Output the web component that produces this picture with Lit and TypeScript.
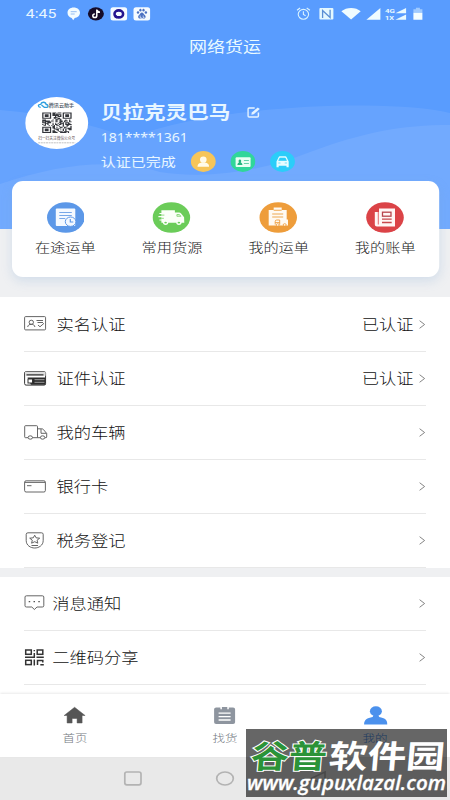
import { LitElement, html, svg, css, TemplateResult, SVGTemplateResult } from "lit";
import { customElement } from "lit/decorators.js";

// The stage is 375 units wide and stretched to 450; icon art is drawn in stretched pixels.
const STRETCH = 1.2;
const icon = (w: number, h: number, body: SVGTemplateResult): TemplateResult => html`
  <svg width=${w / STRETCH} height=${h} viewBox="0 0 ${w} ${h}" preserveAspectRatio="none">${body}</svg>`;

const SIZE = 23;
const qrPath = (): string => {
  let d = "";
  let seed = 77;
  const finder = (x: number, y: number) => {
    const r = Math.max(Math.abs(x - 3), Math.abs(y - 3));
    return r === 3 || r <= 1;
  };
  for (let y = 0; y < SIZE; y++) {
    for (let x = 0; x < SIZE; x++) {
      seed = (seed * 1103515245 + 12345) % 2147483648;
      let on = seed / 2147483648 > 0.48;
      const far = SIZE - 7;
      if (x < 8 && y < 8) on = x < 7 && y < 7 && finder(x, y);
      else if (x >= far - 1 && y < 8) on = x >= far && y < 7 && finder(x - far, y);
      else if (x < 8 && y >= far - 1) on = x < 7 && y >= far && finder(x, y - far);
      if (on) d += `M${x} ${y}h1v1h-1z`;
    }
  }
  return d;
};

const statusLeft = icon(84, 14, svg`
  <path d="M6.500 .5C10 .5 12.800 2.700 12.800 5.800S10 11 7.500 11L6 13.300 4.500 10.900C2 10.300 .2 8.500 .2 5.800.2 2.700 3 .5 6.500 .5z" fill="#f3fcff"/>
  <path d="M3.500 4.700h6M3.500 7h4" stroke="#8ab7ef" stroke-width=".9"/>
  <ellipse cx="28.700" cy="6.800" rx="8" ry="6.600" fill="#160c29"/>
  <path d="M29.600 2.500v6.200a2 1.800 0 1 1-2-1.800M29.600 2.800c.5 1.700 1.600 2.300 3.200 2.500" fill="none" stroke="#fff" stroke-width="1.500"/>
  <rect x="43.300" y=".2" width="16.600" height="13.400" rx="2.500" fill="#f5fbff"/>
  <ellipse cx="51.600" cy="6.900" rx="4.300" ry="3.500" fill="#f5fbff" stroke="#24148f" stroke-width="2.600"/>
  <path d="M47 10l2-2 2 2-2 1.500z" fill="#24148f"/>
  <rect x="66.300" y=".2" width="16.600" height="13.400" rx="2.500" fill="#f5fbff"/>
  <g fill="#4a71c2"><ellipse cx="70.800" cy="5.500" rx="1.200" ry="1.300"/><ellipse cx="73.200" cy="3.200" rx="1.100" ry="1.400"/><ellipse cx="76.300" cy="3.200" rx="1.100" ry="1.400"/><ellipse cx="78.700" cy="5.500" rx="1.200" ry="1.300"/>
  <path d="M74.700 5.500c1.200 0 1.700 1.500 2.800 2.400 1.800 1.500.8 3.900-1.200 3.600-1-.2-2.200-.2-3.200 0-2 .3-3-2.100-1.200-3.600 1.100-.9 1.600-2.400 2.800-2.400z"/></g>
  <path d="M73 8.500v2h1.300M76 8.500v2h1.300" stroke="#f5fbff" stroke-width=".7" fill="none"/>`);

const statusRight = icon(127, 14, svg`
  <g fill="none" stroke="#d9f3ff" stroke-width="1.100"><ellipse cx="7" cy="7.300" rx="5.200" ry="4.900"/><path d="M7 4.300v3.200l2.200 1.200M.5 3.300L3.700 1M10.300 1l3.200 2.300M1.500 2.500h1M12 2.500h1"/></g>
  <rect x="23" y="1" width="14" height="11.500" rx="1" fill="#e4f8ff"/>
  <path d="M26.200 11V3.500l7.500 7V2.800" fill="none" stroke="#5a8fd4" stroke-width="1.300"/>
  <path d="M45 4.300C50 -.2 59.500 -.2 64.300 4.300L54.700 12.500z" fill="#f0fcff"/>
  <path d="M70 12.700L84 1v11.700z" fill="#f0fcff"/>
  <text x="88.500" y="5.900" font-size="5.800" font-weight="700" font-family="Roboto" fill="#e9faff" textLength="10" lengthAdjust="spacingAndGlyphs">4G</text>
  <text x="88.500" y="12.700" font-size="5.800" font-weight="700" font-family="Roboto" fill="#e9faff" textLength="9" lengthAdjust="spacingAndGlyphs">1X</text>
  <path d="M99 6.200L109.700 1v5.200zM99 12.700L109.700 7.500v5.200z" fill="#e9faff"/>
  <path d="M117 2.200h2.500V.8h4v1.400h2.500v3.600h-9z" fill="#9fcaff"/><path d="M117 5.800h9v7h-9z" fill="#f3fdff"/>`);

const waves = svg`
  <path d="M0 110C50 114 90 124 130 138C190 114 290 105 365 105.500C400 106 430 108 450 113V229H0z" fill="#fff" fill-opacity=".08"/>
  <path d="M0 184C60 164 110 158 160 172C210 180 265 170 310 152C365 132 400 125 450 125V229H0z" fill="#fff" fill-opacity=".08"/>`;

const avatar = icon(63, 52, svg`
  <ellipse cx="31.500" cy="26" rx="31.500" ry="26" fill="#fff"/>
  <path d="M15.500 10.300c-3-.2-3.200-3 0-3 .6-2.800 5-2.700 5.400.2 2.500.2 2.500 2.800.2 2.800h-2l-2.800-2.200" fill="none" stroke="#2f9fdf" stroke-width="1.300"/>
  <text x="23.500" y="10.300" font-size="5" font-weight="500" font-family="Noto Sans CJK SC" fill="#49545f" textLength="25.500" lengthAdjust="spacingAndGlyphs">腾讯云助手</text>
  <path d=${qrPath()} transform="translate(17 15.500) scale(1.280 .89)" fill="#33353a"/>
  <text x="13" y="43" font-size="4" font-family="Noto Sans CJK SC" fill="#5a4a4a" textLength="37" lengthAdjust="spacingAndGlyphs">扫一扫关注微信公众号</text>
  <path d="M13 45.800h37" stroke="#b3b3b3" stroke-width=".8" stroke-dasharray="2 .6"/>`);

const edit = icon(13, 11, svg`<path d="M7.500 1H2Q.8 1 .8 2v7q0 1 1.200 1h8q1.200 0 1.200-1V5.500" fill="none" stroke="#e6f4ff" stroke-width="1.500"/><path d="M4.200 7.800l.3-2.300L10.600.4l2 1.700L6.500 7.300z" fill="#e6f4ff"/>`);

const badges = [
  icon(25, 21, svg`<ellipse cx="12.500" cy="10.500" rx="12.400" ry="10.400" fill="#f6c559"/><ellipse cx="12.500" cy="8.700" rx="3.300" ry="3.100" fill="#fffbea"/><path d="M6.700 15.800c0-3 2.300-4.300 5.800-4.300s5.800 1.300 5.800 4.300z" fill="#fffbea"/>`),
  icon(25, 21, svg`<ellipse cx="12.500" cy="10.500" rx="12.400" ry="10.400" fill="#30d69a"/><rect x="5.200" y="6.300" width="15" height="9.800" rx="1" fill="#e8fff4"/><path d="M7 14c0-2 1-2.300 1.600-2.600-.9-1.200-.3-2.800.9-2.800s1.800 1.600.9 2.800c.7.300 1.600.6 1.600 2.600z" fill="#24b57e"/><path d="M13.500 9.500h5M13.500 12.500h5" stroke="#63d2a9" stroke-width="1.200"/>`),
  icon(25, 21, svg`<ellipse cx="12.500" cy="10.500" rx="12.400" ry="10.400" fill="#2bcdf9"/><path d="M6.500 10.500L8.700 6q.3-.7 1-.7h5.800q.7 0 1 .7l2.200 4.500v5.800h-2.200v-1.500H8.700v1.500H6.500z" fill="#e6fcff"/><path d="M8.700 9.500l1.200-2.500h5.400l1.200 2.500zM8.300 12h2.200M14.700 12H17" fill="#2bcdf9" stroke="#2bcdf9" stroke-width=".6"/>`),
];

const disc = (color: string, body: SVGTemplateResult) => icon(38, 31, svg`<ellipse cx="19" cy="15.500" rx="18.800" ry="15.300" fill=${color}/>${body}`);
const actions = [
  { label: "在途运单", art: disc("#5c98e8", svg`<rect x="9" y="6.500" width="19.500" height="17.500" rx="1" fill="#f4f9ff"/><path d="M12.500 10.500H25M12.500 13.500H25M12.500 16.500h6" stroke="#78a8e8" stroke-width="1.100"/><ellipse cx="23.800" cy="19.700" rx="5.300" ry="4.700" fill="#f4f9ff" stroke="#5c98e8" stroke-width="1"/><path d="M23.500 17v3h3" fill="none" stroke="#5c98e8" stroke-width="1.200"/>`) },
  { label: "常用货源", art: disc("#6bcc59", svg`<path d="M9 8.200h13.500v2.300h4.200q1.200 0 2 1l3 3.700.2 5.500H9z" fill="#fbfff8"/><path d="M7 11.500h5.500M6 14.700h5.500M7 18h4" stroke="#fbfff8" stroke-width="1.200"/><path d="M9 13.100h3M9 16.300h2.500M24.500 12.500h2.500l1.500 1.800h-4z" stroke="#6bcc59" stroke-width=".7" fill="#e3f6df"/><g fill="#6bcc59" stroke="#fbfff8" stroke-width="1.400"><ellipse cx="13.200" cy="20.600" rx="2" ry="1.600"/><ellipse cx="26.500" cy="20.600" rx="2" ry="1.600"/></g>`) },
  { label: "我的运单", art: disc("#ee9d3b", svg`<path d="M9.500 8h5V5.500h8V8h5v9.500h1.300v6H9.500z" fill="#fffaf2"/><path d="M14.500 8.200h8M13 12h11M13 15h11" stroke="#eea850" stroke-width="1.100"/><path d="M16 22.500v-3q0-1.500 1.500-1.500h3v4.500" stroke="#ee9d3b" fill="none" stroke-width=".9"/><path d="M16 20.500h4.500" stroke="#ee9d3b" stroke-width=".8"/><ellipse cx="18.500" cy="22.900" rx="1.500" ry="1.200" fill="#fff" stroke="#ee9d3b" stroke-width=".9"/><ellipse cx="25.500" cy="22.900" rx="1.500" ry="1.200" fill="#fff" stroke="#ee9d3b" stroke-width=".9"/>`) },
  { label: "我的账单", art: disc("#db4347", svg`<path d="M13 6.500h16v18H11q-2.200 0-2.200-2V10H13z" fill="#fff6f5"/><path d="M12.300 10v12.500" stroke="#db4347" stroke-width=".8"/><rect x="16.500" y="10.200" width="8.500" height="4" fill="#fff6f5" stroke="#b8454c" stroke-width="1.300"/><path d="M16 17.200h9.700M16 20.500h9.700" stroke="#c8484c" stroke-width="1.300"/>`) },
];

const line = (w: number, h: number, body: SVGTemplateResult) => icon(w, h, svg`<g fill="none" stroke="#555" stroke-width=".9">${body}</g>`);
const listA = [
  { label: "实名认证", value: "已认证", art: line(23, 15, svg`<rect x=".6" y=".6" width="21" height="13.300" rx="1"/><ellipse cx="7.300" cy="6.300" rx="2.200" ry="2.100"/><path d="M3.700 11c.3-2 1.700-2.700 3.600-2.700s3.300.7 3.600 2.700M12.500 4.500H19M13.500 6.500H19M14 9l2 1.800 4-3.500"/>`) },
  { label: "证件认证", value: "已认证", art: icon(23, 15, svg`<rect x=".6" y=".6" width="21" height="13.500" rx="1.500" fill="#fff" stroke="#333"/><path d="M1 .8h20.600v4H1z" fill="#ddd"/><path d="M2.500 3.900h17" stroke="#333" stroke-width="1.300"/><path d="M3.500 6.500h18v7.300H7z" fill="#2c2c2c"/><rect x="4" y="8" width="4.500" height="4" fill="#fff" stroke="#333"/><path d="M10.500 8.700h10M10.500 11.300h10" stroke="#aaa" stroke-width=".9"/>`) },
  { label: "我的车辆", value: "", art: line(24, 15, svg`<path d="M4 12.700H1.500q-.8 0-.8-.8V1.500q0-.8.800-.8H12.500q1 0 1 .8v11.200H8.500M13.500 3.800h4.300q1 0 1.700.8l3.200 3.900v3.500q0 .7-.8.700h-1M16.500 12.700h-3M17 4v4.300h5.500"/><ellipse cx="6.300" cy="12.500" rx="2.200" ry="1.700"/><ellipse cx="18.600" cy="12.500" rx="2.200" ry="1.700"/>`) },
  { label: "银行卡", value: "", art: line(23, 13, svg`<rect x=".6" y=".8" width="20.800" height="11.200" rx="1.500"/><path d="M.6 2.400h20.800M3 5.700h4.500"/>`) },
  { label: "税务登记", value: "", art: line(23, 17, svg`<path d="M4 .8h13.500q1.700 0 1.700 1.500v6.200c0 5-4.500 7.500-8.500 7.500s-8.500-2.500-8.500-7.500V2.300Q2.200.8 4 .8zM7.500 13.500H14"/><path d="M10.700 3.200l1.400 2.600 3.600.4-2.600 2 .7 3-3.100-1.500L7.600 11.200l.7-3-2.600-2 3.600-.4z"/>`) },
];
const listB = [
  { label: "消息通知", art: line(21, 16, svg`<path d="M2.500.8h15.800q1.500 0 1.500 1.200v8.800q0 1.200-1.500 1.200H13l-2.600 2.500L7.800 12H2.500Q1 12 1 10.800V2Q1 .8 2.500.8z"/><path d="M4.700 6.600h1.500M9.500 6.600H11M14.300 6.600h1.500" stroke-width="1.300"/>`) },
  { label: "二维码分享", art: icon(21, 17, svg`<g fill="none" stroke="#333" stroke-width="1.500"><rect x="1.700" y="1" width="5.600" height="4.300"/><rect x="13.200" y="1" width="5.600" height="4.300"/><rect x="1.700" y="11.300" width="5.600" height="4.300"/><path d="M1 8.300h9.300V4M10.300 1v1.300M12.500 8.300h7.300M10.300 10.500v6M13.500 16v-4.500h5.300v2M16.300 15.800h3.500"/></g>`) },
];
const arrow = icon(7, 9, svg`<path d="M.8.7l5 3.800-5 3.800" fill="none" stroke="#777" stroke-width=".9"/>`);

const tabs = [
  { cls: "", label: "首页", art: icon(22, 19, svg`<path d="M11 1.300L21.500 9.500h-3V17h-5v-4.500h-5V17h-5V9.500h-3z" fill="#555" stroke="#555" stroke-width=".5" stroke-linejoin="round"/>`) },
  { cls: "", label: "找货", art: icon(22, 19, svg`<path d="M2.500 1.500h4.300v1.800h1.500V1h5.400v2.300h1.500V1.500h4.300q2 0 2 1.800v13q0 1.800-2 1.800h-17q-2 0-2-1.800v-13q0-1.800 2-1.800z" fill="#8e959f"/><path d="M5 7.200h12M5 10.600h12M5 14h12" stroke="#fff" stroke-width="1.300"/>`) },
  { cls: "on", label: "我的", art: icon(24, 19, svg`<ellipse cx="12.300" cy="5.200" rx="6" ry="4.900" fill="#4b91ed"/><path d="M.5 18.500c0-5 3-6.300 8.500-7.500l1-2h4.600l1 2c5.500 1.200 8.200 2.500 8.200 7.500z" fill="#4b91ed"/>`) },
];

@customElement("app-root")
export class AppRoot extends LitElement {
  static styles = css`
    :host { display: block; position: relative; width: 450px; height: 800px; overflow: hidden; font-family: "Noto Sans CJK SC", sans-serif; }
    * { box-sizing: border-box; }
    svg { display: block; flex: none; }
    .stage { width: 375px; height: 800px; transform: scaleX(1.2); transform-origin: 0 0; background: #eff0f2; display: flex; flex-direction: column; white-space: nowrap; }
    .hero { position: relative; height: 229px; flex: none; background: #599cfe; color: #e8f6ff; }
    .waves { position: absolute; inset: 0; width: 375px; height: 229px; }
    .inner { position: relative; }
    .status { display: flex; height: 28px; align-items: center; padding: 0 22px 0 21.500px; }
    .clock { font: 400 13.200px/28px Roboto, sans-serif; width: 34px; }
    .spacer { flex: 1; }
    .title { height: 36px; line-height: 36px; text-align: center; font-size: 15px; color: #eafaff; }
    .profile { display: flex; padding: 33px 0 0 21px; }
    .who { padding-left: 10.500px; margin-top: -1px; }
    .name { display: flex; align-items: center; gap: 14px; height: 30px; font-size: 18px; font-weight: 700; }
    .name svg { margin-top: 3px; }
    .phone { height: 23px; line-height: 23px; font: 400 11.700px/23px "Noto Sans", sans-serif; }
    .cert { display: flex; align-items: center; height: 24px; font-size: 12.500px; }
    .badges { display: flex; gap: 8px; padding-left: 12.500px; }
    .badges svg + svg { margin-left: 4px; }
    .card { position: relative; flex: none; display: flex; height: 96px; margin: -48px 9.500px 0 10px; padding-top: 21px; background: #fff; border-radius: 9px / 11px; box-shadow: 0 4px 10px rgba(120, 165, 210, .24); }
    .action { flex: 1; display: flex; flex-direction: column; align-items: center; font-size: 12.700px; font-weight: 300; line-height: 20px; gap: 4px; color: #222; }
    .list { flex: none; background: #fff; padding: 0 20px; }
    .a { margin-top: 20px; height: 271px; }
    .b { margin-top: 9px; height: 117px; }
    .row { display: flex; align-items: center; height: 54px; padding-right: .5px; border-bottom: 1px solid #e8e8e8; font-size: 14.400px; line-height: 20px; color: #111; font-weight: 300; }
    .row span { padding-bottom: 1px; }
    .a .row:first-child { height: 55px; }
    .glyph { width: 27px; }
    .b .glyph { width: 23.500px; }
    .value { margin-right: 4px; }
    .tabs { position: relative; flex: none; display: flex; height: 63px; background: #fff; box-shadow: 0 -1px 2px rgba(0, 0, 0, .09); padding-top: 12px; }
    .tab { flex: 1; display: flex; flex-direction: column; align-items: center; font-size: 10.400px; line-height: 16px; gap: 5px; color: #737880; font-weight: 300; }
    .on { color: #4b91ed; }
    .system { flex: 1; background: #e9e9e9; }
    .mark { position: absolute; left: 246px; top: 729px; }
  `;

  render() {
    return html`
      <div class="stage">
        <div class="hero">
          <svg class="waves" viewBox="0 0 450 229" preserveAspectRatio="none">${waves}</svg>
          <div class="inner">
            <div class="status"><span class="clock">4:45</span>${statusLeft}<span class="spacer"></span>${statusRight}</div>
            <div class="title">网络货运</div>
            <div class="profile">
              ${avatar}
              <div class="who">
                <div class="name">贝拉克灵巴马${edit}</div>
                <div class="phone">181****1361</div>
                <div class="cert">认证已完成<div class="badges">${badges}</div></div>
              </div>
            </div>
          </div>
        </div>
        <div class="card">${actions.map((a) => html`<div class="action">${a.art}<span>${a.label}</span></div>`)}</div>
        <div class="list a">
          ${listA.map((r) => html`<div class="row"><span class="glyph">${r.art}</span><span>${r.label}</span><span class="spacer"></span><span class="value">${r.value}</span>${arrow}</div>`)}
        </div>
        <div class="list b">
          ${listB.map((r) => html`<div class="row"><span class="glyph">${r.art}</span><span>${r.label}</span><span class="spacer"></span>${arrow}</div>`)}
        </div>
        <div class="tabs">${tabs.map((t) => html`<div class="tab ${t.cls}">${t.art}<span>${t.label}</span></div>`)}</div>
        <div class="system">
          ${icon(450, 43, svg`<g fill="none" stroke="#b3b3b3" stroke-width="1.700"><rect x="124.800" y="15" width="16.200" height="12.800" rx="2"/><ellipse cx="225" cy="21.500" rx="8.300" ry="6.500"/><path d="M325 15v13l-14-6.500z"/></g>`)}
        </div>
      </div>
      <svg class="mark" width="201" height="68" viewBox="0 0 201 68">
        <rect width="201" height="68" fill="#000" fill-opacity=".6"/>
        <g font-family="Noto Sans CJK SC" font-weight="700" font-size="32">
          <text transform="translate(4 39) skewX(-5)" textLength="76" lengthAdjust="spacingAndGlyphs" fill="#2b9338" stroke="#fff" stroke-width="2" paint-order="stroke">谷普</text>
          <text transform="translate(82 39) skewX(-5)" textLength="116" lengthAdjust="spacingAndGlyphs" fill="#fff">软件园</text>
        </g>
        <text x="1" y="61" font-family="Open Sans" font-weight="600" font-style="italic" font-size="20" textLength="199" lengthAdjust="spacingAndGlyphs" fill="#fff" stroke="#fff" stroke-width=".3">www.gupuxlazal.com</text>
      </svg>
    `;
  }
}
